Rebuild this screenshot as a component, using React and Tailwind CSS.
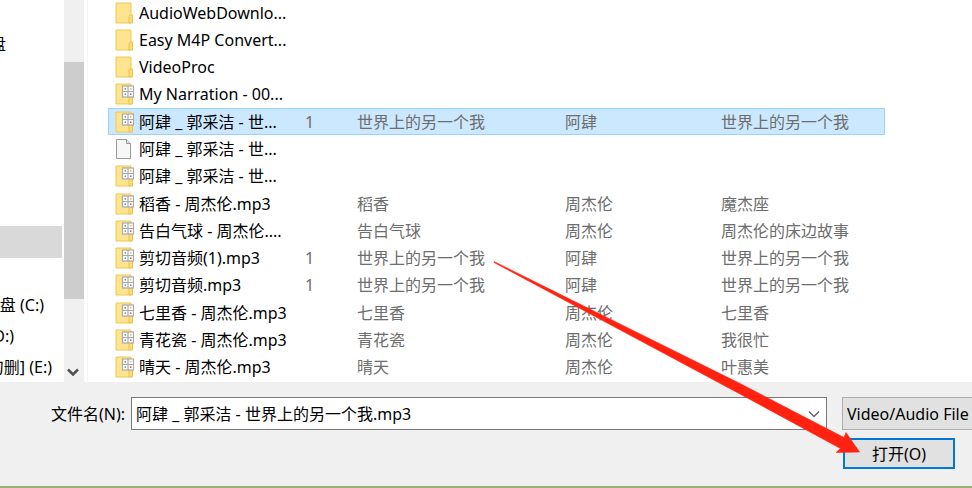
import React, { useState } from 'react';

const FILES = [
  { kind: 'folder', name: 'AudioWebDownlo...' },
  { kind: 'folder', name: 'Easy M4P Convert...' },
  { kind: 'folder', name: 'VideoProc' },
  { kind: 'media', name: 'My Narration - 00...' },
  { kind: 'media', name: '阿肆 _ 郭采洁 - 世...', track: '1', title: '世界上的另一个我', artist: '阿肆', album: '世界上的另一个我' },
  { kind: 'file', name: '阿肆 _ 郭采洁 - 世...' },
  { kind: 'media', name: '阿肆 _ 郭采洁 - 世...' },
  { kind: 'media', name: '稻香 - 周杰伦.mp3', title: '稻香', artist: '周杰伦', album: '魔杰座' },
  { kind: 'media', name: '告白气球 - 周杰伦....', title: '告白气球', artist: '周杰伦', album: '周杰伦的床边故事' },
  { kind: 'media', name: '剪切音频(1).mp3', track: '1', title: '世界上的另一个我', artist: '阿肆', album: '世界上的另一个我' },
  { kind: 'media', name: '剪切音频.mp3', track: '1', title: '世界上的另一个我', artist: '阿肆', album: '世界上的另一个我' },
  { kind: 'media', name: '七里香 - 周杰伦.mp3', title: '七里香', artist: '周杰伦', album: '七里香' },
  { kind: 'media', name: '青花瓷 - 周杰伦.mp3', title: '青花瓷', artist: '周杰伦', album: '我很忙' },
  { kind: 'media', name: '晴天 - 周杰伦.mp3', title: '晴天', artist: '周杰伦', album: '叶惠美' },
];

function FileIcon({ kind }) {
  if (kind === 'file') {
    return (
      <svg width="19" height="22" viewBox="0 0 19 22" className="shrink-0" aria-hidden="true">
        <path d="M1.5 1.5h10l4 4v15h-14z" fill="#f7f7f7" stroke="#999" />
        <path d="M11.5 1.5v4h4" fill="#e4e4e4" stroke="#999" />
      </svg>
    );
  }

  return (
    <svg width="19" height="22" viewBox="0 0 19 22" className="shrink-0" aria-hidden="true">
      <path d="M1 1h15v20H1z" fill="#ffe48f" stroke="#efc850" />
      <path d="M14 21v-6.500l1-1.500h2.500v8z" fill="#fbdc7c" stroke="#eac24e" />
      {kind === 'media' && (
        <g>
          <rect x="7.500" y="3" width="11" height="11" fill="#fff" stroke="#a9a9a9" strokeWidth="1.200" />
          <path d="M13 3v11M7.500 8.500h11" stroke="#a9a9a9" strokeWidth="1.200" />
          <rect x="9.600" y="5.100" width="1.400" height="1.400" fill="#4f8a80" />
          <rect x="15" y="5.100" width="1.400" height="1.400" fill="#f0b429" />
          <rect x="9.600" y="10.500" width="1.400" height="1.400" fill="#3b8de0" />
          <rect x="15" y="10.500" width="1.400" height="1.400" fill="#e0393e" />
        </g>
      )}
    </svg>
  );
}

function Chevron({ className, strokeWidth }) {
  return (
    <svg width="12" height="8" viewBox="0 0 12 8" className={className} aria-hidden="true">
      <path d="M1 1.500l5 5 5-5" fill="none" stroke="currentColor" strokeWidth={strokeWidth} />
    </svg>
  );
}

function NavPane() {
  return (
    <nav className="flex shrink-0">
      <ul className="w-16 flex flex-col justify-end pr-0.5 overflow-hidden">
        <li className="h-8 w-1.5 flex items-center justify-end overflow-hidden mb-[166px]">盘</li>
        <li className="h-8 bg-[#d9d9d9] mb-[31px]" />
        <li className="h-[31px] w-11 flex items-center justify-end overflow-hidden whitespace-nowrap">盘 (C:)</li>
        <li className="h-[31px] w-3.5 flex items-center justify-end overflow-hidden whitespace-nowrap">(D:)</li>
        <li className="h-[31px] w-[52px] flex items-center justify-end overflow-hidden whitespace-nowrap">勿删] (E:)</li>
      </ul>
      {/* Scrollbar */}
      <div className="w-5 bg-[#f0f0f0] flex flex-col">
        <div className="mt-[62px] h-[237px] bg-[#cdcdcd]" />
        <Chevron className="mt-auto mb-1.5 ml-[3px] text-[#505050]" strokeWidth="2.500" />
      </div>
    </nav>
  );
}

function FileTable({ selected, onSelect }) {
  return (
    <table className="w-[777px] h-[382px] -mt-px mb-px ml-5 table-fixed border-collapse text-[#6d6d6d] whitespace-nowrap">
      <colgroup>
        <col className="w-[197px]" />
        <col className="w-[52px]" />
        <col className="w-[208px]" />
        <col className="w-[156px]" />
        <col />
      </colgroup>
      <tbody>
        {FILES.map((file, i) => (
          <tr
            key={i}
            onClick={() => onSelect(i)}
            className={i === selected ? 'bg-[#cce8ff] outline outline-1 -outline-offset-1 outline-[#99d1ff]' : ''}
          >
            <td className="p-0 pl-[7px] text-black">
              <div className="flex items-center gap-[5px]">
                <FileIcon kind={file.kind} />
                <span>{file.name}</span>
              </div>
            </td>
            <td className="p-0">{file.track}</td>
            <td className="p-0">{file.title}</td>
            <td className="p-0">{file.artist}</td>
            <td className="p-0">{file.album}</td>
          </tr>
        ))}
      </tbody>
    </table>
  );
}

export default function App() {
  const [selected, setSelected] = useState(4);
  const [fileName, setFileName] = useState('阿肆 _ 郭采洁 - 世界上的另一个我.mp3');

  return (
    <div className="relative min-h-screen flex flex-col overflow-hidden bg-[#f0f0f0] text-black text-[16px] leading-5 font-['Noto_Sans','Noto_Sans_CJK_SC',sans-serif]">
      <div className="flex bg-white overflow-hidden">
        <NavPane />
        <main className="flex-1 min-w-0 ml-[3px] border-l border-[#f5f5f5] overflow-hidden">
          <FileTable selected={selected} onSelect={setSelected} />
        </main>
      </div>

      {/* File name, type filter and confirm button */}
      <form className="flex-1 flex flex-col pt-[15px] border-b-2 border-[#9bb073]" onSubmit={(e) => e.preventDefault()}>
        <div className="flex items-center">
          <label htmlFor="file-name" className="w-[131px] pr-1.5 text-right shrink-0">文件名(N):</label>
          <div className="flex-1 min-w-0 h-[33px] flex items-center bg-white border border-[#7a7a7a] pr-1.5">
            <input
              id="file-name"
              value={fileName}
              onChange={(e) => setFileName(e.target.value)}
              className="flex-1 min-w-0 px-1 outline-none"
            />
            <Chevron className="text-[#606060]" strokeWidth="1.300" />
          </div>
          <select
            aria-label="File type"
            className="appearance-none w-[130px] h-[33px] ml-[15px] pl-1 shrink-0 bg-[#e1e1e1] border border-r-0 border-[#adadad]"
          >
            <option>Video/Audio File</option>
          </select>
        </div>
        <div className="flex justify-end pt-2 pr-[17px]">
          <button type="submit" className="w-28 h-[31px] flex items-center justify-center bg-[#e1e1e1] border-2 border-[#0078d7]">
            打开(O)
          </button>
        </div>
      </form>

      {/* Pointer to the open button */}
      <svg
        width="972"
        height="488"
        viewBox="0 0 972 488"
        className="absolute left-0 top-0 pointer-events-none"
        aria-hidden="true"
      >
        <path
          d="M494 261.500L740 383.500 844 437.500 846 432.500 859.500 452 836 452.500 840.500 448.500 740 394 494 262.500z"
          fill="#ff2211"
          stroke="#ff2211"
          strokeWidth="0.600"
        />
      </svg>
    </div>
  );
}
